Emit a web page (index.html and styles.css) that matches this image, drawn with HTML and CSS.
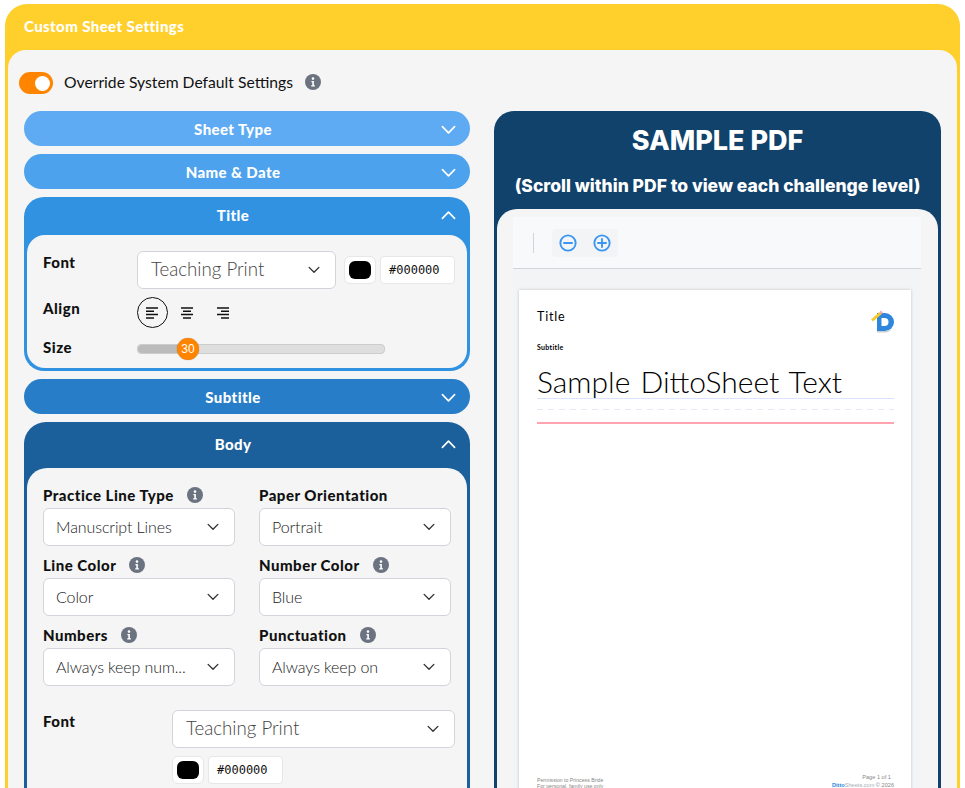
FILE: index.html
```html
<!DOCTYPE html>
<html lang="en">
<head>
    <meta charset="UTF-8">
    <title>Custom Sheet Settings</title>
    <link rel="stylesheet" href="styles.css">
</head>
<body>
    <svg class="defs" width="0" height="0">
        <symbol id="info" viewBox="0 0 16 16">
            <circle cx="8" cy="8" r="8" fill="#6b7280"/>
            <circle cx="8" cy="4.6" r="1.3" fill="#fff"/>
            <path d="M6.4 7h2.5v4.2h1V12.5H6.2v-1.3h1.1V8.3H6.4z" fill="#fff"/>
        </symbol>
        <symbol id="chev-down" viewBox="0 0 16 10">
            <path d="M1.5 1.5L8 8l6.5-6.5" fill="none" stroke="currentColor" stroke-width="1.8" stroke-linecap="round" stroke-linejoin="round"/>
        </symbol>
        <symbol id="chev-up" viewBox="0 0 16 10">
            <path d="M1.5 8.5L8 2l6.5 6.5" fill="none" stroke="currentColor" stroke-width="1.8" stroke-linecap="round" stroke-linejoin="round"/>
        </symbol>
    </svg>

    <div class="container">
        <h1 class="container-title">Custom Sheet Settings</h1>

        <div class="content">
            <div class="override">
                <span class="toggle"><span class="toggle-knob"></span></span>
                <span class="override-label">Override System Default Settings</span>
                <svg class="info"><use href="#info"/></svg>
            </div>

            <div class="columns">
                <div class="settings">
                    <div class="section sheet-type">
                        <div class="section-head">Sheet Type <svg class="head-chev"><use href="#chev-down"/></svg></div>
                    </div>
                    <div class="section name-date">
                        <div class="section-head">Name &amp; Date <svg class="head-chev"><use href="#chev-down"/></svg></div>
                    </div>

                    <div class="section title-sec">
                        <div class="section-head">Title <svg class="head-chev"><use href="#chev-up"/></svg></div>
                        <div class="section-body">
                            <div class="row">
                                <label class="field-label">Font</label>
                                <div class="select font-select select-title">Teaching Print <svg class="sel-chev"><use href="#chev-down"/></svg></div>
                                <div class="swatch"><span></span></div>
                                <div class="hex">#000000</div>
                            </div>
                            <div class="row">
                                <label class="field-label">Align</label>
                                <div class="aligns">
                                    <span class="align active">
                                        <svg width="14" height="12" viewBox="0 0 14 12"><path d="M0 1h12M0 4.300h8M0 7.600h12M0 11h8" stroke="#111" stroke-width="1.500"/></svg>
                                    </span>
                                    <span class="align">
                                        <svg width="14" height="12" viewBox="0 0 14 12"><path d="M1 1h12M3 4.300h8M1 7.600h12M3 11h8" stroke="#111" stroke-width="1.500"/></svg>
                                    </span>
                                    <span class="align">
                                        <svg width="14" height="12" viewBox="0 0 14 12"><path d="M1 1h12M5 4.300h8M1 7.600h12M5 11h8" stroke="#111" stroke-width="1.500"/></svg>
                                    </span>
                                </div>
                            </div>
                            <div class="row">
                                <label class="field-label">Size</label>
                                <div class="slider">
                                    <div class="slider-fill"></div>
                                    <div class="slider-thumb">30</div>
                                </div>
                            </div>
                        </div>
                    </div>

                    <div class="section subtitle-sec">
                        <div class="section-head">Subtitle <svg class="head-chev"><use href="#chev-down"/></svg></div>
                    </div>

                    <div class="section body-sec">
                        <div class="section-head">Body <svg class="head-chev"><use href="#chev-up"/></svg></div>
                        <div class="section-body">
                            <div class="field-grid">
                                <div class="field">
                                    <label class="field-label">Practice Line Type <svg class="info"><use href="#info"/></svg></label>
                                    <div class="select">Manuscript Lines <svg class="sel-chev"><use href="#chev-down"/></svg></div>
                                </div>
                                <div class="field">
                                    <label class="field-label">Paper Orientation</label>
                                    <div class="select">Portrait <svg class="sel-chev"><use href="#chev-down"/></svg></div>
                                </div>
                                <div class="field">
                                    <label class="field-label">Line Color <svg class="info"><use href="#info"/></svg></label>
                                    <div class="select">Color <svg class="sel-chev"><use href="#chev-down"/></svg></div>
                                </div>
                                <div class="field">
                                    <label class="field-label">Number Color <svg class="info"><use href="#info"/></svg></label>
                                    <div class="select">Blue <svg class="sel-chev"><use href="#chev-down"/></svg></div>
                                </div>
                                <div class="field">
                                    <label class="field-label">Numbers <svg class="info"><use href="#info"/></svg></label>
                                    <div class="select">Always keep num... <svg class="sel-chev"><use href="#chev-down"/></svg></div>
                                </div>
                                <div class="field">
                                    <label class="field-label">Punctuation <svg class="info"><use href="#info"/></svg></label>
                                    <div class="select">Always keep on <svg class="sel-chev"><use href="#chev-down"/></svg></div>
                                </div>
                            </div>
                            <div class="body-font">
                                <label class="field-label">Font</label>
                                <div class="body-font-controls">
                                    <div class="select select-title">Teaching Print <svg class="sel-chev"><use href="#chev-down"/></svg></div>
                                    <div class="color-row">
                                        <div class="swatch"><span></span></div>
                                        <div class="hex">#000000</div>
                                    </div>
                                </div>
                            </div>
                        </div>
                    </div>
                </div>

                <div class="preview">
                    <h2 class="preview-title">SAMPLE PDF</h2>
                    <p class="preview-note">(Scroll within PDF to view each challenge level)</p>
                    <div class="preview-body">
                        <div class="viewer">
                            <div class="toolbar">
                                <span class="toolbar-sep"></span>
                                <div class="zoom-group">
                                    <svg class="zoom-icon" viewBox="0 0 20 20"><circle cx="10" cy="10" r="8.500" fill="none" stroke="#3b96f3" stroke-width="2.100"/><path d="M5.500 10h9" stroke="#3b96f3" stroke-width="2.100" stroke-linecap="round"/></svg>
                                    <svg class="zoom-icon" viewBox="0 0 20 20"><circle cx="10" cy="10" r="8.500" fill="none" stroke="#3b96f3" stroke-width="2.100"/><path d="M5.500 10h9M10 5.500v9" stroke="#3b96f3" stroke-width="2.100" stroke-linecap="round"/></svg>
                                </div>
                            </div>
                            <div class="pdf-area">
                                <div class="pdf-page">
                                    <div class="pdf-head">
                                        <div>
                                            <div class="pdf-title">Title</div>
                                            <div class="pdf-subtitle">Subtitle</div>
                                        </div>
                                        <svg class="pdf-logo" viewBox="0 0 24 24">
                                            <path d="M7 4h8a8.500 8.500 0 0 1 0 18H7z" fill="#2f86dc"/>
                                            <path d="M7 22h8c3 0 5.500-1 7-3-1.500 3-4 4.500-7 4.500H7z" fill="#c9ccd2"/>
                                            <path d="M11.500 9h3a3.500 3.500 0 0 1 0 8h-3z" fill="#fff"/>
                                            <path d="M1 10.500L9.500 3l2 2.200L3 12.500z" fill="#f6c92f"/>
                                            <path d="M9.500 3l1.500-1.400 2 2.200-1.500 1.400z" fill="#f3a8b4"/>
                                        </svg>
                                    </div>
                                    <div class="practice">
                                        <div class="practice-text">Sample DittoSheet Text</div>
                                        <div class="line-top"></div>
                                        <div class="line-mid"></div>
                                        <div class="line-base"></div>
                                    </div>
                                    <div class="pdf-foot">
                                        <div>Permission to Princess Bride<br>For personal, family use only</div>
                                        <div class="pdf-foot-right">Page 1 of 1 &nbsp;<br><span class="foot-brand"><b>Ditto</b>Sheets.com</span> &copy; 2026</div>
                                    </div>
                                </div>
                            </div>
                        </div>
                    </div>
                </div>
            </div>
        </div>
    </div>
</body>
</html>
```

FILE: styles.css
```css
* {
    box-sizing: border-box;
}

html, body {
    height: 788px;
    overflow: hidden;
}

body {
    margin: 0;
    padding: 4px 5px 0;
    background-color: #fff;
    font-family: "Lato", "Noto Sans", sans-serif;
    color: #111;
}

.defs {
    position: absolute;
}

.container {
    height: 800px;
    background-color: #ffd02b;
    border-radius: 22px 22px 0 0;
    padding: 0 3px;
    overflow: hidden;
}

.container-title {
    margin: 0;
    height: 46px;
    padding: 12px 0 0 16px;
    font-size: 15px;
    line-height: 20px;
    font-weight: 900;
    letter-spacing: 0.4px;
    color: #fff;
}

.content {
    background-color: #f5f5f5;
    border-radius: 18px 18px 0 0;
    padding: 22px 16px 0 11px;
    height: 760px;
}

.override {
    display: flex;
    align-items: center;
    height: 22px;
}

.toggle {
    width: 34px;
    height: 22px;
    border-radius: 11px;
    background-color: #ff8500;
    display: flex;
    align-items: center;
    justify-content: flex-end;
    padding-right: 3px;
}

.toggle-knob {
    width: 15px;
    height: 15px;
    border-radius: 50%;
    background-color: #fff;
}

.override-label {
    margin-left: 11px;
    padding-bottom: 2px;
    font-size: 15.700px;
}

.info {
    width: 16px;
    height: 16px;
    flex: none;
}

.override .info {
    margin: -2px 0 0 12px;
}

.columns {
    display: flex;
    gap: 24px;
    margin-top: 17px;
    margin-left: 5px;
}

.settings {
    width: 446px;
    flex: none;
    display: flex;
    flex-direction: column;
    gap: 8px;
}

.section {
    border-radius: 18px;
    color: #fff;
}

.section-head {
    position: relative;
    height: 35px;
    padding-right: 28px;
    line-height: 36px;
    text-align: center;
    font-size: 15px;
    font-weight: 900;
    letter-spacing: 0.4px;
}

.head-chev {
    position: absolute;
    right: 14px;
    top: 14px;
    width: 15px;
    height: 10px;
    color: #fff;
}

.sheet-type { background-color: #5eabf3; }
.name-date { background-color: #4ca2ec; }
.title-sec { background-color: #3292e2; padding: 0 3px 3px; border-radius: 20px; }
.subtitle-sec { background-color: #277dc7; }
.body-sec { background-color: #1b5f9b; padding: 0 3px 3px; border-radius: 22px; }

.title-sec .section-head { height: 38px; margin: 0 -3px; line-height: 37px; }
.body-sec .section-head { height: 46px; margin: 0 -3px; line-height: 45px; }
.body-sec .head-chev { top: 17px; }
.title-sec .head-chev { top: 13px; }

.section-body {
    background-color: #f5f5f5;
    color: #111;
    border-radius: 18px;
}

.title-sec .section-body {
    height: 133px;
    padding: 16px 12px 0 16px;
}

.body-sec .section-body {
    height: 340px;
    padding: 16px 12px 0 16px;
    border-radius: 20px 20px 0 0;
}

.row {
    display: flex;
    align-items: flex-start;
    margin-bottom: 8px;
}

.row .field-label {
    width: 94px;
    flex: none;
}

.field-label {
    display: flex;
    align-items: center;
    gap: 13px;
    height: 22px;
    font-size: 15px;
    font-weight: 900;
    letter-spacing: 0.5px;
    color: #111;
}

.select {
    position: relative;
    height: 38px;
    line-height: 35px;
    background-color: #fff;
    border: 1px solid #d1d5db;
    border-radius: 6px;
    padding: 0 30px 0 12px;
    font-size: 16px;
    font-weight: 300;
    letter-spacing: -0.1px;
    color: #222;
    white-space: nowrap;
}

.select-title {
    padding-left: 13px;
    font-size: 18.700px;
    letter-spacing: 0;
    color: #444;
}

.sel-chev {
    position: absolute;
    right: 15px;
    top: 14px;
    width: 12px;
    height: 8px;
    color: #333;
}

.font-select {
    width: 199px;
    margin-right: 8px;
}

.swatch {
    width: 32px;
    height: 28px;
    margin-top: 5px;
    background-color: #fff;
    border: 1px solid #e5e7eb;
    border-radius: 6px;
    display: flex;
    align-items: center;
    justify-content: center;
    flex: none;
}

.swatch span {
    width: 22px;
    height: 18px;
    border-radius: 6px;
    background-color: #000;
}

.hex {
    width: 75px;
    height: 28px;
    margin: 5px 0 0 4px;
    padding-left: 8px;
    background-color: #fff;
    border: 1px solid #e5e7eb;
    border-radius: 4px;
    font-family: "DejaVu Sans Mono", "Liberation Mono", monospace;
    font-size: 12px;
    line-height: 26px;
    flex: none;
}

.aligns {
    display: flex;
    align-items: center;
    height: 31px;
}

.align {
    width: 31px;
    height: 31px;
    margin-right: 5px;
    border-radius: 50%;
    display: flex;
    align-items: center;
    justify-content: center;
}

.align.active {
    border: 1px solid #111;
    margin-right: 3px;
}

.slider {
    position: relative;
    width: 248px;
    height: 10px;
    margin-top: 8px;
    background-color: #dedede;
    border: 1px solid #ccc;
    border-radius: 4px;
}

.slider-fill {
    width: 50px;
    height: 100%;
    background-color: #bbb;
    border-radius: 4px 0 0 4px;
}

.slider-thumb {
    position: absolute;
    left: 39px;
    top: -7px;
    width: 22px;
    height: 22px;
    border-radius: 50%;
    background-color: #ff8500;
    color: #fff;
    font-family: "Liberation Sans", sans-serif;
    font-size: 12px;
    line-height: 22px;
    text-align: center;
    box-shadow: 0 0 1px rgba(0,0,0,0.4);
}

.field-grid {
    display: grid;
    grid-template-columns: 192px 192px;
    column-gap: 24px;
    row-gap: 8px;
}

.field .field-label {
    margin-bottom: 2px;
}

.body-font {
    display: flex;
    margin-top: 24px;
}

.body-font .field-label {
    width: 129px;
    flex: none;
}

.body-font-controls {
    width: 283px;
}

.color-row {
    display: flex;
    margin-top: 3px;
}

.preview {
    width: 447px;
    height: 700px;
    flex: none;
    background-color: #10426b;
    border-radius: 20px 20px 0 0;
    padding: 0 3px;
    color: #fff;
    text-align: center;
}

.preview-title {
    margin: 0;
    padding-top: 12px;
    font-family: "Inter", sans-serif;
    font-size: 27px;
    line-height: 36px;
    font-weight: 800;
}

.preview-note {
    margin: 15px 0 0;
    font-family: "Inter", sans-serif;
    font-size: 17.500px;
    line-height: 24px;
    font-weight: 800;
}

.preview-body {
    margin-top: 11px;
    height: 600px;
    background-color: #f5f5f5;
    border-radius: 20px 20px 0 0;
    padding: 8px 17px 0 16px;
}

.viewer {
    height: 100%;
    background-color: #f3f4f6;
}

.toolbar {
    height: 52px;
    background-color: #f8f9fb;
    border-bottom: 1px solid #d1d5db;
    display: flex;
    align-items: center;
    padding: 1px 0 0 20px;
}

.toolbar-sep {
    width: 1px;
    height: 20px;
    background-color: #d1d5db;
}

.zoom-group {
    display: flex;
    align-items: center;
    gap: 16px;
    height: 28px;
    margin-left: 18px;
    padding: 0 7px;
    background-color: #f3f4f6;
    border-radius: 4px;
}

.zoom-icon {
    width: 18px;
    height: 18px;
}

.pdf-area {
    padding: 21px 10px 0 6px;
}

.pdf-page {
    position: relative;
    width: 392px;
    height: 507px;
    background-color: #fff;
    box-shadow: 0 0 3px rgba(0,0,0,0.2);
    padding: 19px 17px 0 18px;
    text-align: left;
    color: #000;
    display: flex;
    flex-direction: column;
}

.pdf-head {
    display: flex;
    justify-content: space-between;
    align-items: flex-start;
}

.pdf-title {
    font-size: 12.500px;
    line-height: 16px;
    font-weight: 400;
    letter-spacing: 0.8px;
}

.pdf-subtitle {
    margin-top: 18px;
    font-size: 7px;
    line-height: 9px;
    font-weight: 700;
    letter-spacing: 0.3px;
}

.pdf-logo {
    width: 24px;
    height: 24px;
}

.practice {
    margin-top: 12px;
}

.practice-text {
    font-weight: 300;
    font-size: 30px;
    line-height: 34px;
    word-spacing: 2px;
    white-space: nowrap;
}

.line-top {
    height: 1px;
    background-color: #dbe4ff;
}

.line-mid {
    height: 1px;
    margin-top: 10px;
    background-image: repeating-linear-gradient(90deg, #e6e9f5 0 6px, transparent 6px 11px);
}

.line-base {
    height: 2px;
    margin-top: 12px;
    background-color: #ffa4ae;
}

.pdf-foot {
    margin-top: auto;
    margin-bottom: 8px;
    display: flex;
    justify-content: space-between;
    align-items: flex-end;
    font-family: "Liberation Sans", sans-serif;
    font-size: 5.200px;
    line-height: 6px;
    color: #888;
}

.pdf-foot-right {
    font-size: 5.600px;
    line-height: 8px;
    text-align: right;
}

.foot-brand {
    color: #a5adb6;
}

.foot-brand b {
    color: #2f86dc;
}
```
